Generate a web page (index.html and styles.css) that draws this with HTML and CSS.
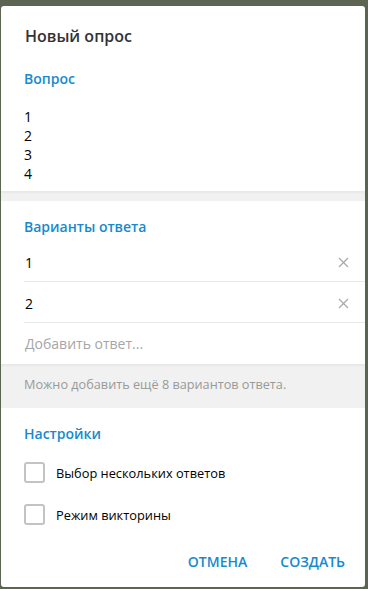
FILE: index.html
```html
<!DOCTYPE html>
<html lang="ru">

<head>
    <meta charset="UTF-8">
    <meta name="viewport" content="width=device-width, initial-scale=1.0">
    <title>Новый опрос</title>
    <link rel="stylesheet" href="styles.css">
</head>

<body>
    <div class="dialog">
        <h2 class="title">Новый опрос</h2>

        <div class="section">
            <div class="label">Вопрос</div>
            <div class="question">1<br>2<br>3<br>4</div>
        </div>

        <div class="band"></div>

        <div class="section answers">
            <div class="label">Варианты ответа</div>
            <div class="option">
                <span>1</span>
                <svg class="remove" width="11" height="11" viewBox="0 0 11 11">
                    <path d="M1 1 L10 10 M10 1 L1 10" stroke="#a8a8a8" stroke-width="1.2" fill="none" />
                </svg>
            </div>
            <div class="option">
                <span>2</span>
                <svg class="remove" width="11" height="11" viewBox="0 0 11 11">
                    <path d="M1 1 L10 10 M10 1 L1 10" stroke="#a8a8a8" stroke-width="1.2" fill="none" />
                </svg>
            </div>
            <div class="option add">Добавить ответ...</div>
        </div>

        <div class="hint">Можно добавить ещё 8 вариантов ответа.</div>

        <div class="section settings">
            <div class="label">Настройки</div>
            <div class="check"><span class="box"></span>Выбор нескольких ответов</div>
            <div class="check"><span class="box"></span>Режим викторины</div>
        </div>

        <div class="buttons">
            <button>Отмена</button>
            <button>Создать</button>
        </div>
    </div>
</body>

</html>
```

FILE: styles.css
```css
body {
    margin: 0;
    background-color: #5c6551;
    font-family: "Open Sans", "Noto Sans", sans-serif;
    color: #000;
}

.dialog {
    margin: 6px 3px 0 1px;
    height: 581px;
    background-color: white;
    border-radius: 3px;
    overflow: hidden;
}

.title {
    margin: 0;
    padding: 19px 24px 0 24px;
    font-size: 16px;
    line-height: 22px;
    font-weight: 600;
    color: #333;
}

.section {
    padding: 0 0 0 23px;
}

.label {
    padding-top: 22px;
    font-size: 14px;
    line-height: 20px;
    font-weight: 600;
    color: #168acd;
}

.question {
    padding: 18px 0 8px 0;
    font-size: 14px;
    line-height: 19px;
}

.band {
    height: 10px;
    background-color: #f1f1f1;
    box-shadow: inset 0 2px 2px rgba(0, 0, 0, 0.04);
}

.answers .label {
    padding-top: 16px;
    margin-bottom: 4px;
}

.option {
    display: flex;
    align-items: center;
    justify-content: space-between;
    box-sizing: border-box;
    height: 41px;
    padding: 3px 16px 0 1px;
    border-bottom: 1px solid #e8e8e8;
    font-size: 14px;
}

.option.add {
    border-bottom: none;
    color: #a6a6a6;
    padding-top: 0;
}

.hint {
    height: 44px;
    box-sizing: border-box;
    padding: 11px 23px 0 23px;
    background-color: #f1f1f1;
    box-shadow: inset 0 2px 2px rgba(0, 0, 0, 0.04);
    font-size: 12.7px;
    color: #999;
}

.settings .label {
    padding-top: 16px;
    margin-bottom: 18px;
}

.check {
    display: flex;
    align-items: center;
    height: 21px;
    margin-bottom: 21px;
    font-size: 12.8px;
}

.box {
    box-sizing: border-box;
    width: 21px;
    height: 21px;
    margin-right: 11px;
    border: 2px solid #c3c3c3;
    border-radius: 3px;
}

.buttons {
    display: flex;
    justify-content: flex-end;
    gap: 33px;
    padding: 6px 20px 0 0;
}

.buttons button {
    padding: 0;
    border: none;
    background: none;
    font-family: inherit;
    font-size: 14px;
    line-height: 20px;
    font-weight: 600;
    text-transform: uppercase;
    color: #168acd;
}
```
